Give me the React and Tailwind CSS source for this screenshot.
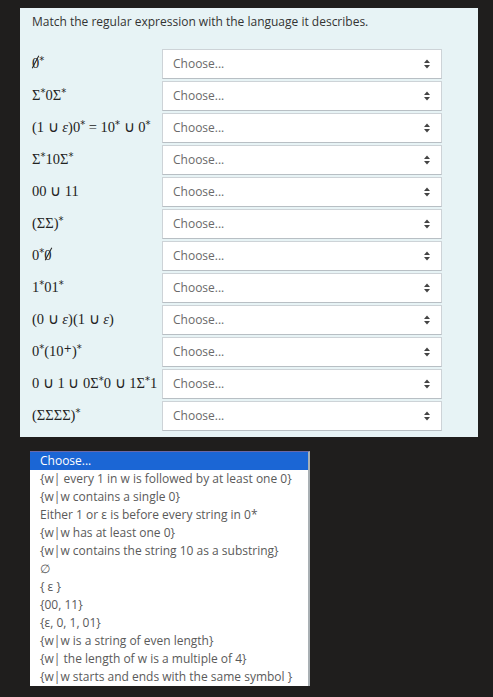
import React from 'react';

const S = ({ children }) => (
  <span className="inline-block align-top font-['DejaVu_Sans',sans-serif] text-[10px] leading-[14px]">{children}</span>
);
const E = () => <i>ε</i>;
const Empty = () => (
  <span className="relative inline-block">
    0
    <span className="absolute left-[45%] top-[1px] h-[14px] w-px rotate-[28deg] bg-[#222]" />
  </span>
);

const rows = [
  <><Empty /><S>*</S></>,
  <>Σ<S>*</S>0Σ<S>*</S></>,
  <>(1 ∪ <E />)0<S>*</S> = 10<S>*</S> ∪ 0<S>*</S></>,
  <>Σ<S>*</S>10Σ<S>*</S></>,
  <>00 ∪ 11</>,
  <>(ΣΣ)<S>*</S></>,
  <>0<S>*</S><Empty /></>,
  <>1<S>*</S>01<S>*</S></>,
  <>(0 ∪ <E />)(1 ∪ <E />)</>,
  <>0<S>*</S>(10<S>+</S>)<S>*</S></>,
  <>0 ∪ 1 ∪ 0Σ<S>*</S>0 ∪ 1Σ<S>*</S>1</>,
  <>(ΣΣΣΣ)<S>*</S></>,
];

const options = [
  '{w| every 1 in w is followed by at least one 0}',
  '{w|w contains a single 0}',
  'Either 1 or ε is before every string in 0*',
  '{w|w has at least one 0}',
  '{w|w contains the string 10 as a substring}',
  '∅',
  '{ ε }',
  '{00, 11}',
  '{ε, 0, 1, 01}',
  '{w|w is a string of even length}',
  '{w| the length of w is a multiple of 4}',
  '{w|w starts and ends with the same symbol }',
];

const Arrows = () => (
  <svg width="8" height="10" viewBox="0 0 8 10" className="text-[#444]">
    <path d="M4 0.5 L7 4 L1 4 Z" fill="currentColor" />
    <path d="M4 9.5 L7 6 L1 6 Z" fill="currentColor" />
  </svg>
);

export default function App() {
  return (
    <div className="min-h-[697px] bg-[#1f1e1d] pt-2 font-['Open_Sans',sans-serif]">
      <div className="ml-5 w-[458px] bg-[#e7f3f5] px-3 pt-[5px] pb-[6px]">
        <p className="text-[12px] leading-[18px] text-[#333]">
          Match the regular expression with the language it describes.
        </p>
        <div className="mt-[18px] flex flex-col gap-[2px]">
          {rows.map((label, i) => (
            <div key={i} className="flex items-center">
              <div className="w-[130px] -mt-[3px] whitespace-nowrap font-['Liberation_Serif',serif] text-[14.5px] leading-[18px] text-[#222]">
                {label}
              </div>
              <div className="flex h-[30px] w-[280px] items-center justify-between border border-[#cdd3d7] border-b-[#b8bfc4] bg-white pl-[10px] pr-[10px]">
                <span className="text-[12px] text-[#6a6a6a]">Choose...</span>
                <Arrows />
              </div>
            </div>
          ))}
        </div>
      </div>
      <div className="ml-[30px] mt-[14px] w-[280px] border-t border-t-[#6a68a8] border-r-2 border-r-[#a9b0b4] bg-white">
        <div className="h-[18px] bg-[#1b66d5] pl-[10px] text-[12px] leading-[18px] text-white">
          Choose...
        </div>
        {options.map((o, i) => (
          <div key={i} className="h-[18px] whitespace-nowrap pl-[10px] text-[12px] leading-[18px] text-[#5a5a5a]">
            {o}
          </div>
        ))}
      </div>
    </div>
  );
}
